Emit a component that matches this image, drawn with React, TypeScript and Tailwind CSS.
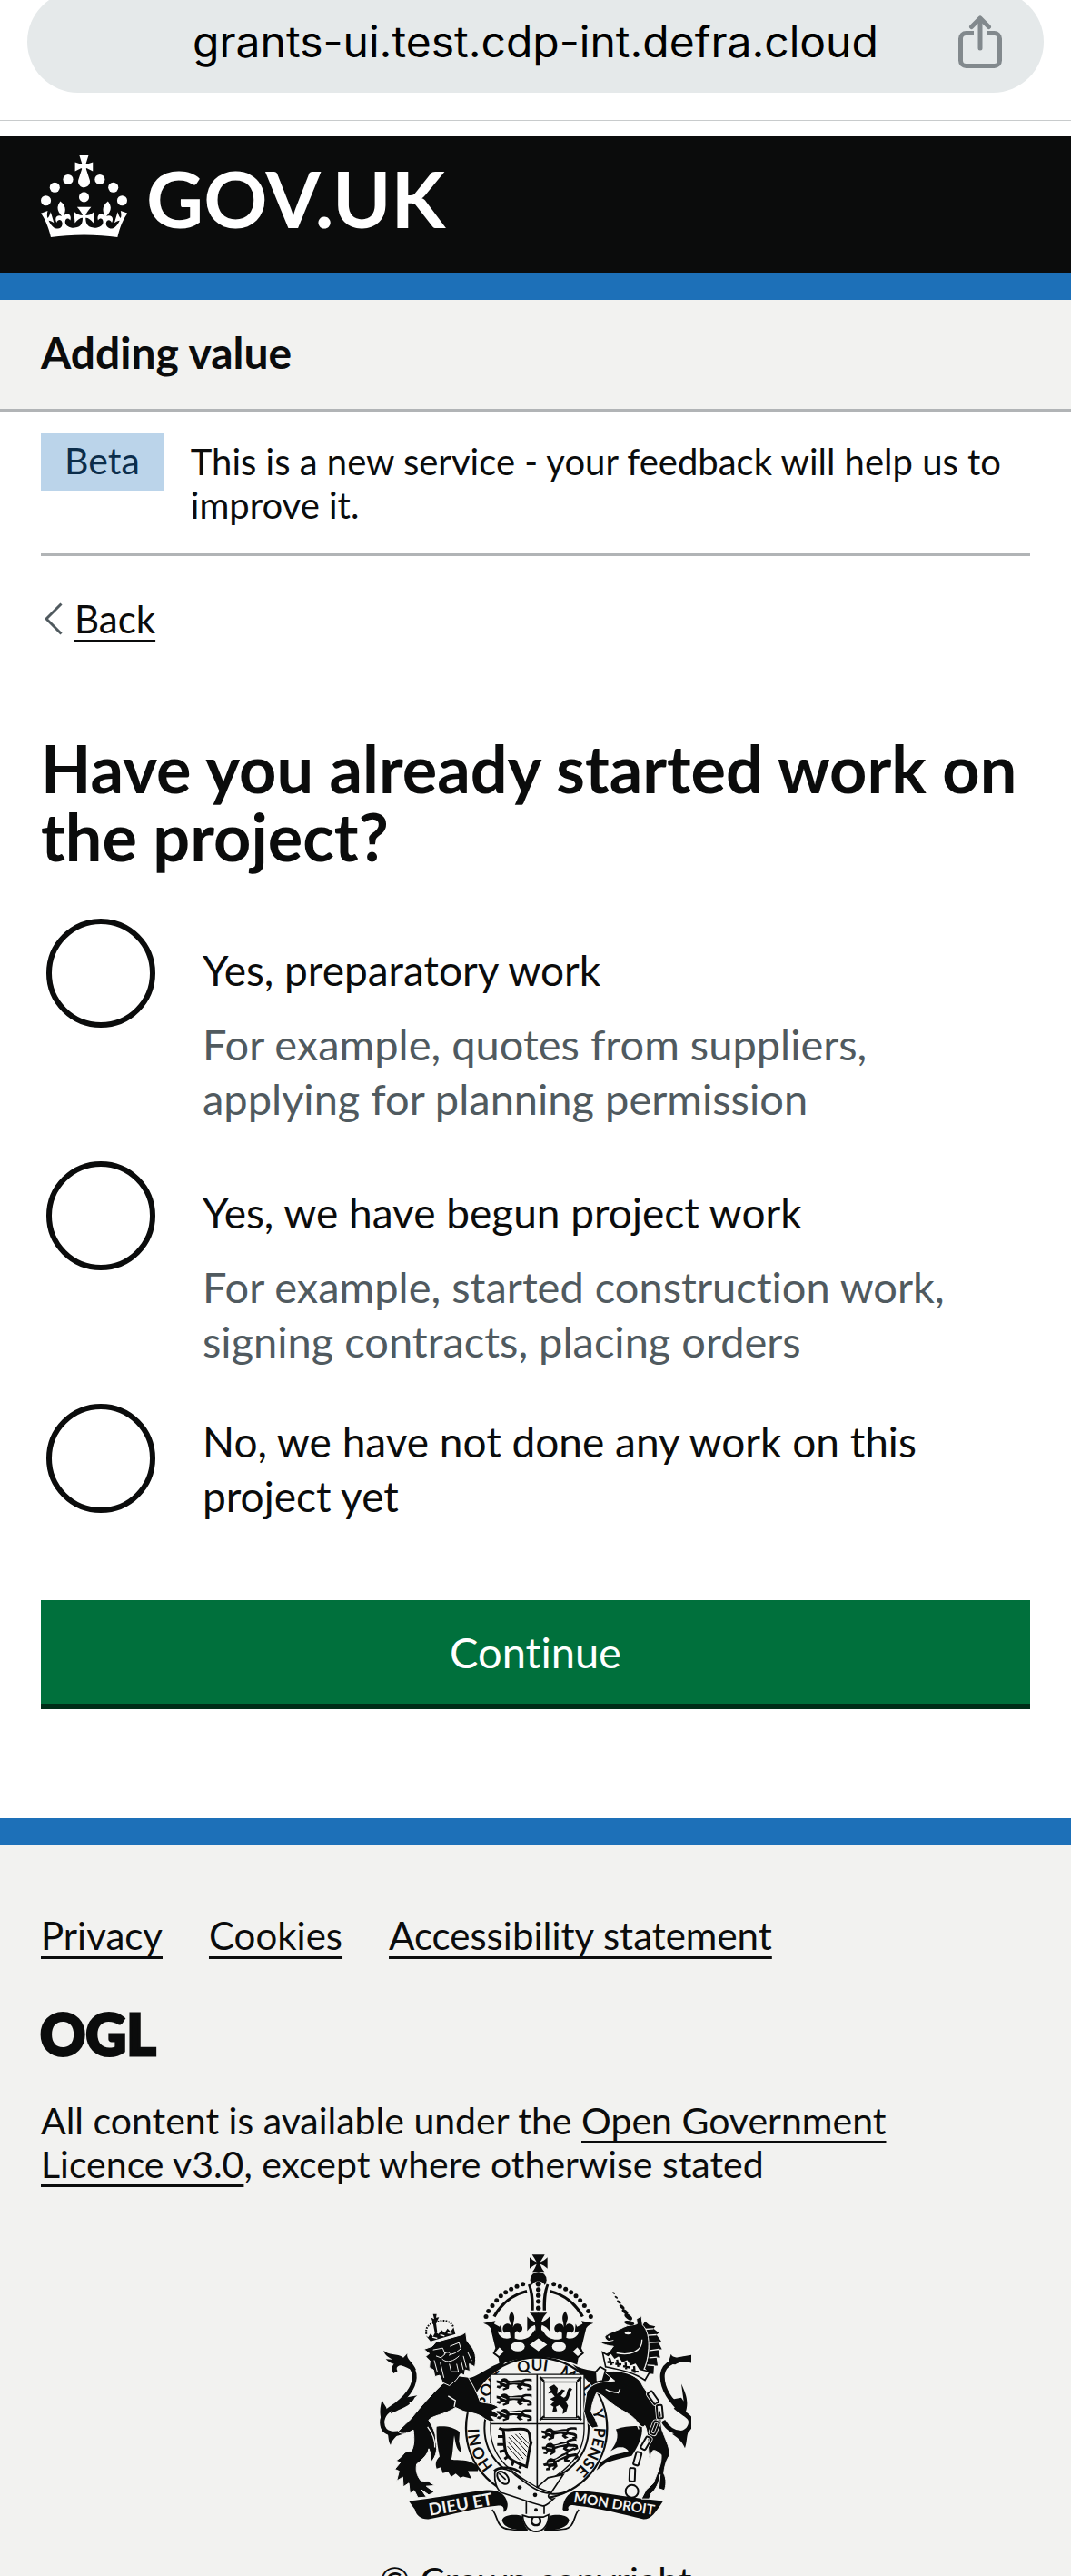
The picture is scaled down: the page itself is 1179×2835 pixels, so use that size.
import React from "react";

const INK = "#0b0c0c";
const PAPER = "#f2f2f0";

const OPTIONS = [
  {
    id: "preparatory",
    label: "Yes, preparatory work",
    hint: "For example, quotes from suppliers, applying for planning permission",
  },
  {
    id: "begun",
    label: "Yes, we have begun project work",
    hint: "For example, started construction work, signing contracts, placing orders",
  },
  { id: "none", label: "No, we have not done any work on this project yet" },
];

const FOOTER_LINKS = ["Privacy", "Cookies", "Accessibility statement"];

function ShareIcon() {
  return (
    <svg viewBox="0 0 48 58" className="h-[58px] w-12" fill="none" stroke="#82898d" strokeWidth="5" aria-hidden="true">
      <path d="M17 19.500H8.500a6 6 0 0 0-6 6V49.500a6 6 0 0 0 6 6h31a6 6 0 0 0 6-6V25.500a6 6 0 0 0-6-6H31.500" />
      <path d="M24 36V4" strokeLinecap="round" />
      <path d="M14.500 12.500L24 3l9.500 9.500" strokeLinecap="round" strokeLinejoin="round" />
    </svg>
  );
}

function CrownLogo() {
  return (
    <svg viewBox="0 0 63.400 60" className="h-[90px] w-[95px]" fill="#ffffff" aria-hidden="true">
      <circle cx="20" cy="17.6" r="3.7" />
      <circle cx="10.2" cy="23.5" r="3.7" />
      <circle cx="3.7" cy="33.2" r="3.7" />
      <circle cx="31.7" cy="30.6" r="3.7" />
      <circle cx="43.3" cy="17.6" r="3.7" />
      <circle cx="53.2" cy="23.5" r="3.7" />
      <circle cx="59.7" cy="33.2" r="3.7" />
      <path d="M33.1,9.8c.2-.1.3-.3.5-.5l4.6,2.400v-6.800l-4.600,1.500c-.1-.2-.3-.3-.5-.5l1.900-5.900h-6.700l1.900,5.900c-.2.1-.3.3-.5.5l-4.600-1.500v6.800l4.600-2.400c.1.2.3.3.5.5l-2.600,8c-.9,2.800,1.200,5.700,4.100,5.700h0c3,0,5.100-2.900,4.100-5.700l-2.600-8ZM37,37.900s-3.400,3.800-4.100,6.100c2.200,0,4.200-.5,6.400-2.800l-.7,8.500c-2-2.800-4.400-4.100-5.700-3.800.1,3.100.5,6.700,5.800,7.200,3.700.3,6.700-1.500,7-3.800.4-2.600-2-4.300-3.700-1.600-1.400-4.500,2.400-6.100,4.900-3.200-1.900-4.500-1.800-7.700,2.400-10.900,3,4,2.600,7.300-1.200,11.100,2.400-1.300,6.200,0,4,4.600-1.200-2.800-3.700-2.200-4.200.2-.3,1.700.7,3.700,3,4.200,1.900.3,4.700-.9,7-5.900-1.300,0-2.400.7-3.900,1.700l2.400-8c.6,2.300,1.400,3.700,2.200,4.500.6-1.600.5-2.800,0-5.300l5,1.800c-2.600,3.600-5.200,8.700-7.300,17.500-7.400-1.100-15.700-1.700-24.500-1.700h0c-8.800,0-17.100.6-24.500,1.700-2.100-8.900-4.700-13.900-7.300-17.500l5-1.800c-.5,2.500-.6,3.700,0,5.300.8-.8,1.600-2.300,2.200-4.500l2.400,8c-1.500-1-2.600-1.700-3.900-1.700,2.300,5,5.200,6.200,7,5.900,2.300-.4,3.300-2.400,3-4.200-.5-2.400-3-3.100-4.200-.2-2.200-4.600,1.600-6,4-4.600-3.700-3.700-4.200-7.100-1.200-11.100,4.200,3.200,4.300,6.400,2.400,10.900,2.500-2.800,6.300-1.300,4.900,3.200-1.800-2.700-4.100-1-3.700,1.600.3,2.300,3.300,4.100,7,3.800,5.400-.5,5.700-4.200,5.800-7.200-1.300-.2-3.700,1-5.700,3.800l-.7-8.500c2.200,2.300,4.200,2.700,6.400,2.800-.7-2.300-4.100-6.100-4.100-6.100h10.600,0Z" />
    </svg>
  );
}

function OglLogo() {
  return (
    <svg viewBox="0 0 124 50" className="h-[50px] w-[124px] overflow-visible" role="img" aria-label="Open Government Licence" fill={INK} stroke={INK} strokeWidth="3" fontFamily="Lato, sans-serif" fontWeight="900" fontSize="62">
      <text x="-1" y="48">OGL</text>
    </svg>
  );
}

const CROWN_DOTS = [
  [527, 161], [507, 168], [488, 177], [470, 188], [454, 200], [440, 215], [426, 232], [413, 250], [405, 268],
];

function CrownHalf() {
  return (
    <>
      {CROWN_DOTS.map(([x, y]) => (
        <circle key={x} cx={x} cy={y} r="7.500" />
      ))}
      <path d="M540 184C495 195 455 225 432 268" fill="none" stroke={INK} strokeWidth="10" />
      <path d="M543 163C553 190 553 220 553 248H563C564 215 563 190 551 160Z" />
      <path d="M396 290L436 282L432 292L450 302L455 292L458 322L444 316C446 336 470 346 486 338L484 322C478 316 470 316 468 322C456 316 458 296 472 292C482 290 488 296 489 304L484 284C478 272 482 262 489 250C500 262 500 274 496 286L494 304C496 292 508 288 518 294C530 302 526 318 514 322C510 314 502 314 500 324L500 340C520 350 548 340 556 326L566 312L579 335V402C530 402 490 410 450 427L446 404L428 390L436 372L420 306C414 298 406 293 396 290Z" />
      <path d="M549 255H579V335L566 322C570 308 568 300 566 296C556 300 548 306 541 316V268C550 278 560 284 568 286C564 272 558 264 549 255Z" />
      <ellipse cx="510" cy="367" rx="23" ry="16" fill={PAPER} />
      <path d="M449 366L468 384L448 402L431 388Z" fill={PAPER} stroke={INK} strokeWidth="5" />
    </>
  );
}

/* One walking lion of the English quarters, on a 120 by 44 grid. */
function WalkingLion({ x, y, turn = 0 }: { x: number; y: number; turn?: number }) {
  return (
    <g transform={`translate(${x} ${y}) rotate(${turn})`}>
      <path d="M2 8L14 10C18 0 34 -2 40 8C52 14 66 4 84 8C90 2 104 2 118 4V14C118 10 96 8 90 14C98 24 110 18 118 28V40L104 42L102 36L112 34C104 28 96 30 88 26L80 30L90 36L78 40L68 30L72 24C60 20 52 24 44 24L42 36L24 42L22 36L32 32L22 28L12 36L2 32L4 26L14 26L12 20L2 16Z" />
      <path d="M44 15H84M18 14L34 20" stroke={PAPER} strokeWidth="3" />
    </g>
  );
}

function RoyalArms() {
  const links: [number, number, number][] = [
    [957, 536, -35], [979, 582, -5], [962, 635, 22], [933, 686, 30], [905, 737, 16], [888, 790, 2],
  ];
  const horn: [number, number, number][] = [
    [827, 190, 5], [835, 204, 6], [844, 220, 8], [854, 236, 10], [864, 252, 12], [875, 269, 15],
  ];
  return (
    <svg viewBox="54 63 1029 917" className="h-[306px] w-[343px]" role="img" aria-label="Royal coat of arms" fill={INK}>
      {/* garter */}
      <path d="M330 470C370 480 410 430 470 415L400 520L350 510Z" />
      <path d="M690 425C730 450 780 450 830 450L780 520Z" />
      <circle cx="572" cy="636" r="233" fill={PAPER} stroke={INK} strokeWidth="7" />
      <circle cx="572" cy="636" r="172" fill="none" stroke={INK} strokeWidth="6" />
      <path id="garter-line" d="M572 826A190 190 0 0 1 572 446A190 190 0 0 1 572 826" fill="none" />
      <g fontFamily="Lato, sans-serif" fontWeight="700" fontSize="52">
        <text><textPath href="#garter-line" startOffset="160">HONI</textPath></text>
        <text><textPath href="#garter-line" startOffset="372">SOIT</textPath></text>
        <text><textPath href="#garter-line" startOffset="536">QUI</textPath></text>
        <text><textPath href="#garter-line" startOffset="672">MAL</textPath></text>
        <text><textPath href="#garter-line" startOffset="836">Y</textPath></text>
        <text><textPath href="#garter-line" startOffset="892">PENSE</textPath></text>
      </g>

      {/* crown */}
      <path d="M557 63H599C592 76 588 80 584 88C594 84 600 80 608 72V110C600 102 592 98 584 95C588 108 592 114 598 120H558C564 114 568 106 572 95C562 98 556 104 549 110V72C557 80 564 84 572 88C568 80 564 74 557 63Z" />
      <circle cx="578" cy="147" r="27" />
      <path d="M554 172C560 144 596 144 602 172L594 250H562Z" fill={PAPER} />
      <CrownHalf />
      <g transform="translate(1156 0) scale(-1 1)">
        <CrownHalf />
      </g>
      <circle cx="578" cy="160" r="9" />
      {[179, 198, 218, 240].map((y) => (
        <circle key={y} cx="578" cy={y} r="8" />
      ))}
      <path d="M578 340L607 361L578 382L549 361Z" fill={PAPER} />

      {/* shield */}
      <path d="M420 459H729V640C729 740 650 790 574 832C500 790 420 740 420 640Z" fill={PAPER} stroke={INK} strokeWidth="4" />
      <path d="M574 459V832M420 622H729" stroke={INK} strokeWidth="5" />
      <WalkingLion x={438} y={470} />
      <WalkingLion x={438} y={521} />
      <WalkingLion x={438} y={571} />
      <WalkingLion x={586} y={636} turn={-3} />
      <WalkingLion x={586} y={690} turn={-12} />
      <WalkingLion x={588} y={748} turn={-26} />
      <g fill="none" stroke={INK}>
        <rect x="585" y="470" width="133" height="137" strokeWidth="3" />
        <rect x="597" y="484" width="107" height="118" strokeWidth="4" />
        <path d="M583 468l14 14M720 468l-14 14M583 609l14-12M720 609l-14-12" strokeWidth="7" />
      </g>
      <path d="M612 502L630 492L642 504L640 524L656 508L666 512L652 530L662 536C676 530 668 512 682 502L690 508C678 518 684 540 668 548L676 562L670 582L658 590L660 574L648 560L636 566L640 580L624 584L628 566L618 560L630 548L616 540L632 532L622 520L610 522L620 510Z" />
      <g fill="none" stroke={INK}>
        <path d="M448 636C470 650 520 632 538 642C556 652 546 672 554 684C546 708 544 740 538 768" strokeWidth="9" />
        <path d="M462 642C468 680 462 700 474 724C484 742 510 752 536 762" strokeWidth="9" />
        <path d="M444 664h18M442 690h20M450 714l18-4M466 738l14-10M490 760l6-14M516 770l4-12" strokeWidth="9" />
        <path d="M476 696L516 742M476 680L528 738M480 666L538 730M490 660L542 716M502 656L544 700M514 654L546 688" strokeWidth="3" />
      </g>

      {/* strap and pendant */}
      <path d="M574 832L610 800L660 790L620 850Z" fill={PAPER} stroke={INK} strokeWidth="5" />
      <path d="M538 875V920M597 880V920" stroke={INK} strokeWidth="5" />
      <path d="M434 785C436 762 480 768 500 790C540 820 575 850 616 852C604 862 616 872 628 870C612 884 606 894 592 893C540 880 480 855 456 850C440 838 432 812 434 785Z" fill={PAPER} stroke={INK} strokeWidth="5" />
      <path d="M432 778C450 760 500 765 520 785" fill="none" stroke={INK} strokeWidth="8" />
      <ellipse cx="461" cy="800" rx="15" ry="24" transform="rotate(-40 461 800)" fill={PAPER} stroke={INK} strokeWidth="6" />
      <path d="M448 786L470 806" stroke={INK} strokeWidth="5" />
      <path d="M616 852C640 858 670 850 682 838" fill="none" stroke={INK} strokeWidth="6" />
      <circle cx="516" cy="832" r="7" />
      <circle cx="567" cy="857" r="7" />
      <circle cx="570" cy="906" r="6" />
      <path d="M425 906C446 925 436 966 480 970C500 973 525 973 542 972M712 906C692 925 702 966 660 970C640 973 615 973 598 972" fill="none" stroke={INK} strokeWidth="5" />
      <path d="M458 940C464 920 505 920 524 926C528 945 532 960 544 973C500 974 462 966 458 940ZM680 940C674 920 634 920 614 926C610 945 606 960 596 973C640 974 676 966 680 940Z" />
      <path d="M526 924L545 930H594L612 922C612 996 530 996 526 924Z" fill={PAPER} stroke={INK} strokeWidth="5" />
      <path d="M560 930C538 966 602 966 580 930" fill="none" stroke={INK} strokeWidth="7" />

      {/* motto ribbons */}
      <path d="M150 877C230 868 330 850 400 842C440 838 470 850 476 885C478 900 470 915 462 912C466 900 462 888 440 893C380 898 300 920 215 937C190 938 175 925 170 905Z" />
      <path d="M990 877C900 868 800 850 720 843C690 840 660 860 658 905C664 915 672 913 678 905C672 890 690 888 705 893C780 900 850 920 925 937C950 938 965 915 990 877Z" />
      <g fill={PAPER} fontFamily="Lato, sans-serif" fontWeight="700">
        <text transform="translate(220 926) rotate(-10)" fontSize="56">DIEU ET</text>
        <text transform="translate(693 881) rotate(9)" fontSize="46">MON DROIT</text>
      </g>

      {/* lion */}
      <g fill="none" stroke={INK} strokeWidth="15">
        <path d="M150 636C110 665 64 660 62 618C62 584 92 572 110 558C150 526 172 490 168 458C163 430 140 415 118 422C104 426 98 438 106 452" />
      </g>
      <path d="M67 380C82 398 112 388 132 404L145 390C140 408 166 420 174 444L150 440C120 420 100 434 74 408L96 410C82 402 70 396 67 380Z" />
      <path d="M98 560L145 534L178 528C160 540 172 545 150 552C166 556 120 575 90 588ZM62 540C64 560 84 565 76 588L58 604C52 575 58 560 62 540ZM80 652L125 650C110 662 95 674 90 692C82 680 84 668 80 652Z" />
      <path d="M242 632C265 628 300 632 318 650L316 680L324 716C308 710 305 690 300 660C296 690 296 720 290 740C320 745 350 735 380 766L378 778L345 778L357 803L330 796L320 800L305 786L290 797L280 780L262 785L256 765L242 770C235 750 242 740 252 730C245 700 240 665 242 632Z" />
      <path stroke={PAPER} strokeWidth="3" d="M260 492C220 530 190 565 160 602C150 615 130 630 114 648C128 660 150 652 165 642C170 680 166 700 158 712L138 716L124 732L108 744L122 750L104 772L118 778L110 810L130 798L132 830L150 818L154 852L168 842L180 866L208 864L192 840L216 857L234 848L208 828L236 826L214 812L190 810C176 792 172 776 176 755C196 738 212 725 216 704C224 720 222 735 224 747C242 730 246 700 238 680C242 650 226 630 216 610C224 595 270 592 304 568L330 580C350 586 380 586 402 606L418 614L434 612L420 597L440 602L446 590L425 578L446 568C430 553 404 555 386 550C376 520 360 490 346 468L300 462Z" />
      <path d="M212 632C226 650 238 670 236 700M280 530L304 545L300 566" fill="none" stroke={PAPER} strokeWidth="4" />
      <path stroke={PAPER} strokeWidth="3" d="M200 376L228 366L240 352L326 328L338 320L342 348L354 364C370 380 374 404 368 434L350 424L352 448L336 444L334 462L322 456L306 478L284 496L262 486L252 462L236 466L232 444L218 436L220 414L206 400L218 390Z" />
      <g fill="none" stroke={PAPER} strokeWidth="3">
        <path d="M230 378L262 372L270 392L256 404L240 398M286 366L316 354L322 374L304 388L282 396M266 392C276 384 282 384 288 392" />
        <path d="M260 408C276 424 300 414 316 398M284 424L290 450H314L308 424M234 412L244 450M330 398L340 436M322 412L330 444M254 420L266 470M344 384L358 414" />
      </g>
      <path d="M206 330L214 336L222 324L230 334L238 318L248 326L258 312L268 322L278 308L288 318L298 304L304 326L222 350Z" />
      <path d="M228 336l16 4M254 328l14 4M278 322l14 2" stroke={PAPER} strokeWidth="4" />
      <path d="M208 326C204 300 220 290 238 288C262 276 288 280 298 304" fill="none" stroke={INK} strokeWidth="6" strokeDasharray="5 4" />
      <path d="M236 322L230 290L224 272L234 276L230 260L242 260L240 272L250 270L244 282L240 290L244 320Z" />

      {/* unicorn */}
      <g fill="none" stroke={INK} strokeWidth="15">
        <path d="M1062 590C1010 545 984 500 988 458C994 420 1030 410 1090 404" />
        <path d="M990 612C1006 640 1030 652 1050 652C1074 648 1088 622 1078 604C1070 592 1050 584 1030 566" />
      </g>
      <path d="M1016 392C1020 402 1030 404 1040 402L1090 394V424C1060 410 1040 420 1030 426L1006 424ZM1000 520L1026 540L1050 536L1058 548L1050 490C1064 520 1078 550 1062 590ZM1040 650L1076 640C1066 664 1070 680 1062 702C1054 684 1044 672 1020 656Z" />
      <path d="M834 640C870 628 905 628 920 632C924 664 906 700 886 728C850 736 820 744 800 752L770 776L782 750L800 738C820 722 850 722 876 712C862 696 850 700 838 700L816 712C834 690 846 665 834 640Z" />
      <path stroke={PAPER} strokeWidth="3" d="M796 452C850 440 904 462 918 488C930 515 960 540 978 574C992 596 976 622 990 652C1002 684 1014 704 1010 728C1000 742 994 764 992 786C1002 804 1000 826 994 842L976 836L980 790C978 814 966 840 950 852L944 870H918L934 840L958 818C972 780 986 756 984 724C968 712 950 692 948 740C936 720 944 650 930 628C918 640 910 620 902 612C880 586 850 578 822 556C800 540 790 524 770 520C760 540 754 560 752 582L766 606L776 632L756 636L740 618L728 580L738 516C756 486 780 484 830 480Z" />
      <path d="M800 508C816 520 830 516 842 520L848 506M896 606L910 640" fill="none" stroke={PAPER} strokeWidth="4" />
      <path d="M930 284L944 296L964 300L958 308L976 322L968 328L984 350L974 352L986 376L974 376L980 404L968 402L972 430L960 430L958 458L946 456L930 440C950 390 950 330 920 300Z" />
      <path d="M930 310L958 308M938 330L968 328M944 354L976 352M946 380L976 376M944 404L970 402M938 428L962 430" stroke={PAPER} strokeWidth="4" />
      <path stroke={PAPER} strokeWidth="3" d="M798 332C815 318 840 315 860 303C876 294 892 298 904 292L902 276L918 266L922 296C938 310 944 340 942 372C940 410 930 440 918 456L880 440C850 424 830 420 796 392C812 388 816 378 826 366C806 364 790 360 782 352L816 352C806 348 796 342 798 332Z" />
      <path d="M836 388C880 398 922 384 920 344" fill="none" stroke={PAPER} strokeWidth="4" />
      <ellipse cx="874" cy="322" rx="11" ry="5" fill={PAPER} />
      <circle cx="812" cy="335" r="4" fill={PAPER} />
      <path d="M800 352L826 346" stroke={PAPER} strokeWidth="3" />
      {horn.map(([x, y, r]) => (
        <ellipse key={x} cx={x} cy={y} rx={r} ry={r / 2} transform={`rotate(38 ${x} ${y})`} />
      ))}
      <ellipse cx="878" cy="289" rx="17" ry="7" transform="rotate(12 878 289)" />
      <path d="M790 386L808 396L818 388L830 404L844 396L856 416L872 408L884 426L900 420L914 442L946 450L930 478C892 452 850 444 800 434Z" fill={PAPER} stroke={INK} strokeWidth="5" />
      <path d="M812 404l8 24M838 410l4 24M866 420l2 22M894 432l2 22M806 418l22 2M832 424l20 2M858 432l22 4M886 444l22 6" stroke={INK} strokeWidth="7" />
      <path d="M782 434L800 444L790 480L768 484L766 452Z" fill={PAPER} stroke={INK} strokeWidth="5" />
      {links.map(([x, y, turn]) => (
        <g key={y} transform={`translate(${x} ${y}) rotate(${turn})`} fill="none">
          <rect x="-9" y="-22" width="18" height="44" rx="5" stroke={PAPER} strokeWidth="11" />
          <rect x="-9" y="-22" width="18" height="44" rx="5" stroke={INK} strokeWidth="6" />
        </g>
      ))}
      <circle cx="887" cy="845" r="21" fill={PAPER} stroke={INK} strokeWidth="6" />
    </svg>
  );
}

export default function App() {
  const link = "underline decoration-[3px] underline-offset-[7px]";
  return (
    <div className="h-screen overflow-y-auto bg-white font-['Lato',sans-serif] text-[#0b0c0c] [font-variant-ligatures:none] [scrollbar-width:none]">
      <div className="flex h-[133px] items-start overflow-hidden border-b border-[#c8cbcc] px-[30px]">
        <div className="-mt-2.5 grid h-28 flex-1 grid-cols-[1fr_auto_1fr] items-center rounded-full bg-[#e5e9ea]">
          <span />
          <span className="font-['Inter',sans-serif] text-[48px] leading-[60px] text-black">
            grants-ui.test.cdp-int.defra.cloud
          </span>
          <button type="button" aria-label="Share" className="mr-[46px] justify-self-end">
            <ShareIcon />
          </button>
        </div>
      </div>

      <header className="mt-[17px]">
        <div className="border-b-[30px] border-[#1d70b8] bg-[#0b0c0c] px-[45px] pt-[19px] pb-[37px]">
          <a href="#" aria-label="GOV.UK" className="flex w-fit items-center gap-[21px] text-white">
            <CrownLogo />
            <span className="pt-1 text-[87px] leading-[90px] font-bold">GOV.UK</span>
          </a>
        </div>
        <div className="border-b-[3px] border-[#b1b4b6] bg-[#f2f2f0] px-[45px] pt-7 pb-8">
          <a href="#" className="text-[48px] leading-[60px] font-bold">
            Adding value
          </a>
        </div>
      </header>

      <div className="mx-[45px]">
        <div className="flex items-start gap-[30px] border-b-[3px] border-[#b1b4b6] pt-6 pb-[29px]">
          <strong className="bg-[#bbd4ea] px-[26px] pt-1.5 pb-[9px] text-[41px] leading-[48px] font-normal text-[#0c2d4a]">
            Beta
          </strong>
          <p className="pt-[7px] text-[40px] leading-[48px]">
            This is a new service - your feedback will help us to improve it.
          </p>
        </div>

        <a href="#" className="mt-[45px] flex w-fit items-center gap-[13px] pl-1 text-[42px] leading-[48px]">
          <svg viewBox="0 0 20 36" className="h-9 w-5" fill="none" stroke="#505a5f" strokeWidth="3" aria-hidden="true">
            <path d="M18.500 1.500L2 18l16.500 16.500" />
          </svg>
          <span className={link}>Back</span>
        </a>

        <main className="pt-[103px] pb-[120px]">
          <form onSubmit={(e) => e.preventDefault()}>
            <fieldset>
              <legend>
                <h1 className="text-[72px] leading-[75px] font-bold">
                  Have you already started work on the project?
                </h1>
              </legend>
              <div className="mt-[53px] flex flex-col gap-[39px]">
                {OPTIONS.map((o) => (
                  <div key={o.id} className="flex items-start gap-[52px] pl-1.5 text-[47px] leading-[60px]">
                    <input
                      type="radio"
                      name="started"
                      id={o.id}
                      aria-describedby={o.hint ? `${o.id}-hint` : undefined}
                      className="size-[120px] shrink-0 appearance-none rounded-full border-[6px] border-[#0b0c0c] checked:bg-[#0b0c0c] checked:shadow-[inset_0_0_0_24px_white]"
                    />
                    <div className="min-w-0 flex-1">
                      <label htmlFor={o.id} className="flex min-h-[114px] items-center py-3 text-[46px]">
                        {o.label}
                      </label>
                      {o.hint && (
                        <p id={`${o.id}-hint`} className="-mt-1.5 pr-6 text-[#505a5f]">
                          {o.hint}
                        </p>
                      )}
                    </div>
                  </div>
                ))}
              </div>
            </fieldset>
            <button
              type="submit"
              className="mt-[72px] w-full border-b-[6px] border-[#002d18] bg-[#00703c] py-[27px] text-[47px] leading-[60px] text-white"
            >
              Continue
            </button>
          </form>
        </main>
      </div>

      <footer className="border-t-[30px] border-[#1d70b8] bg-[#f2f2f0] px-[45px] pt-[75px] pb-[75px] text-[41px] leading-[48px]">
        <ul className="flex flex-wrap gap-x-[51px] gap-y-4 text-[42px]">
          {FOOTER_LINKS.map((t) => (
            <li key={t}>
              <a href="#" className={link}>
                {t}
              </a>
            </li>
          ))}
        </ul>
        <div className="mt-[60px]">
          <OglLogo />
        </div>
        <p className="mt-[46px] max-w-[960px]">
          All content is available under the{" "}
          <a href="#" className={link}>
            Open Government Licence v3.0
          </a>
          , except where otherwise stated
        </p>
        <a href="#" className="mx-auto mt-[75px] flex w-fit flex-col items-center gap-[29px]">
          <RoyalArms />
          <span className={link}>© Crown copyright</span>
        </a>
      </footer>
    </div>
  );
}
